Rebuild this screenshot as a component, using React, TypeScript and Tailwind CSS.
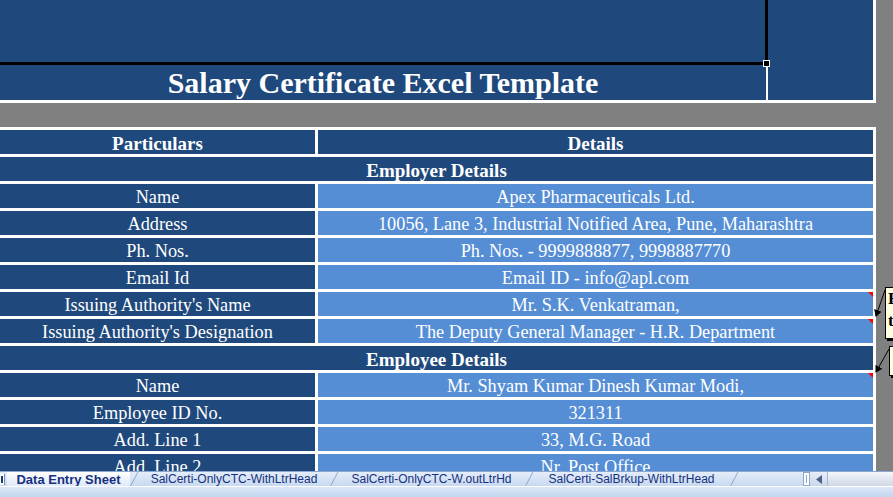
const dark = 'bg-[#1f497d]';
const light = 'bg-[#558ed5]';

type Row =
  | { kind: 'head'; left: string; right: string }
  | { kind: 'section'; label: string }
  | { kind: 'item'; left: string; right: string; note?: boolean };

const rows: Row[] = [
  { kind: 'head', left: 'Particulars', right: 'Details' },
  { kind: 'section', label: 'Employer Details' },
  { kind: 'item', left: 'Name', right: 'Apex Pharmaceuticals Ltd.' },
  { kind: 'item', left: 'Address', right: '10056, Lane 3, Industrial Notified Area, Pune, Maharashtra' },
  { kind: 'item', left: 'Ph. Nos.', right: 'Ph. Nos. - 9999888877, 9998887770' },
  { kind: 'item', left: 'Email Id', right: 'Email ID - info@apl.com' },
  { kind: 'item', left: "Issuing Authority's Name", right: 'Mr. S.K. Venkatraman,', note: true },
  { kind: 'item', left: "Issuing Authority's Designation", right: 'The Deputy General Manager - H.R. Department', note: true },
  { kind: 'section', label: 'Employee Details' },
  { kind: 'item', left: 'Name', right: 'Mr. Shyam Kumar Dinesh Kumar Modi,', note: true },
  { kind: 'item', left: 'Employee ID No.', right: '321311' },
  { kind: 'item', left: 'Add. Line 1', right: '33, M.G. Road' },
  { kind: 'item', left: 'Add. Line 2', right: 'Nr. Post Office' },
];

function Cell({ text, bg, bold, note, grow }: { text: string; bg: string; bold?: boolean; note?: boolean; grow?: boolean }) {
  return (
    <div
      className={`relative h-full flex items-center justify-center pt-[2px] leading-none text-white whitespace-nowrap ${bg} ${
        bold ? 'font-bold text-[19px]' : 'text-[18.3px]'
      } ${grow ? 'flex-1' : 'w-[315px] shrink-0'}`}
    >
      {text}
      {note && (
        <span className="absolute right-0 top-0 w-0 h-0 border-t-[5px] border-l-[5px] border-t-[#ff0000] border-l-transparent" />
      )}
    </div>
  );
}

function Slant() {
  return (
    <svg width="8" height="15" className="shrink-0">
      <line x1="0" y1="15" x2="8" y2="0" stroke="#8ba7d0" strokeWidth="1" />
    </svg>
  );
}

function Tab({ label, width, active }: { label: string; width: string; active?: boolean }) {
  return (
    <div
      className={`${width} shrink-0 h-full flex items-center justify-center leading-none text-[#15317e] ${
        active
          ? 'font-bold text-[13px] bg-gradient-to-b from-[#ffffff] to-[#dfe9f7]'
          : 'text-[12px] bg-gradient-to-b from-[#e4edf9] to-[#c8d9f0]'
      }`}
    >
      {label}
    </div>
  );
}

export default function App() {
  return (
    <div className="relative w-[893px] h-[497px] overflow-hidden bg-[#808080] flex flex-col font-['Liberation_Serif',serif]">
      {/* banner block */}
      <div className="w-[876px] h-[103px] shrink-0 bg-white pr-[3px] pb-[3px]">
        <div className="flex h-full">
          <div className="w-[768px] flex flex-col">
            <div className={`h-[65px] ${dark} border-r-[3px] border-b-[3px] border-black shadow-[0_1px_0_#e3b887]`} />
            <div className="flex h-[35px]">
              <div className={`w-[766px] ${dark} flex items-center justify-center text-white font-bold text-[30px] leading-none pt-[1px]`}>
                Salary Certificate Excel Template
              </div>
              <div className="w-[2px] bg-white" />
            </div>
          </div>
          <div className={`flex-1 ${dark}`} />
        </div>
      </div>

      <div className="h-[24px] shrink-0" />

      {/* data entry table */}
      <div className="w-[876px] flex-1 min-h-0 overflow-hidden bg-white pt-[3px] pr-[3px] flex flex-col gap-[3px]">
        {rows.map((r, i) => (
          <div key={i} className="h-[24px] shrink-0 flex gap-[3px]">
            {r.kind === 'section' ? (
              <Cell text={r.label} bg={dark} bold grow />
            ) : r.kind === 'head' ? (
              <>
                <Cell text={r.left} bg={dark} bold />
                <Cell text={r.right} bg={dark} bold grow />
              </>
            ) : (
              <>
                <Cell text={r.left} bg={dark} />
                <Cell text={r.right} bg={light} note={r.note} grow />
              </>
            )}
          </div>
        ))}
      </div>

      {/* sheet tabs + scroll bar */}
      <div className="h-[26px] shrink-0 flex flex-col font-['Liberation_Sans',sans-serif]">
        <div className="h-[15px] flex border-t border-[#8ba7d0] bg-gradient-to-b from-[#e4edf9] to-[#c8d9f0]">
          <div className="w-[7px] shrink-0 flex items-center">
            <div className="w-[5px] h-[11px] bg-white border-r border-[#6f8fbf] flex items-center justify-center">
              <div className="w-[2px] h-[7px] bg-[#1f3a6e]" />
            </div>
          </div>
          <Tab label="Data Entry Sheet" width="w-[123px]" active />
          <Slant />
          <Tab label="SalCerti-OnlyCTC-WithLtrHead" width="w-[192px]" />
          <Slant />
          <Tab label="SalCerti-OnlyCTC-W.outLtrHd" width="w-[187px]" />
          <Slant />
          <Tab label="SalCerti-SalBrkup-WithLtrHead" width="w-[197px]" />
          <Slant />
          <div className="flex-1" />
          <div className="w-[7px] shrink-0 bg-white border border-[#8ba7d0] flex items-center justify-center">
            <div className="w-[1px] h-[8px] bg-[#8ba7d0]" />
          </div>
          <div className="w-[18px] shrink-0 flex items-center justify-center bg-gradient-to-b from-[#e8eef7] to-[#c9d6ea] border-r border-[#a5b8d6]">
            <svg width="6" height="9" viewBox="0 0 6 9">
              <path d="M6 0 L0 4.5 L6 9 Z" fill="#4d6185" />
            </svg>
          </div>
          <div className="flex-1 bg-gradient-to-b from-[#f4f6fa] to-[#cfd8e6]" />
        </div>
        <div className="flex-1 border-t border-white bg-gradient-to-b from-[#dce8f7] to-[#c2d6f0]" />
      </div>

      {/* selection handle */}
      <div className="absolute left-[764px] top-[61px] w-[5px] h-[5px] bg-black outline outline-1 outline-white" />

      {/* cell comments */}
      <div className="absolute left-[885px] top-[287px] w-[120px] h-[52px] bg-[#ffffe1] border border-black shadow-[2px_2px_0_#000] px-[2px] text-[17px] leading-[22px] font-bold text-black">
        Enter
        <br />
        the
      </div>
      <div className="absolute left-[889px] top-[346px] w-[120px] h-[30px] bg-[#ffffe1] border border-black shadow-[2px_2px_0_#000] px-[2px] text-[15px] leading-[20px] text-[#e8a33a]">
        ·
      </div>
      <svg className="absolute left-0 top-0 pointer-events-none" width="893" height="497">
        <defs>
          <marker id="tip" markerWidth="8" markerHeight="8" refX="6" refY="4" orient="auto">
            <path d="M0 0 L7 4 L0 8 Z" fill="#000" />
          </marker>
        </defs>
        <line x1="885" y1="290" x2="876" y2="316" stroke="#000" strokeWidth="1" markerEnd="url(#tip)" />
        <line x1="889" y1="349" x2="876" y2="372" stroke="#000" strokeWidth="1" markerEnd="url(#tip)" />
      </svg>
    </div>
  );
}
